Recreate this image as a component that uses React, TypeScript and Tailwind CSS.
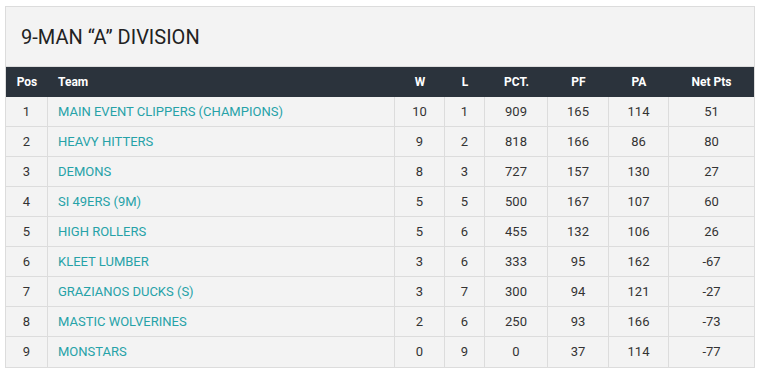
const COLS = "grid grid-cols-[42px_347px_50px_40px_63px_61px_60px_85px]";

interface Row {
  pos: number;
  team: string;
  w: number;
  l: number;
  pct: number;
  pf: number;
  pa: number;
  net: number;
}

const ROWS: Row[] = [
  { pos: 1, team: "MAIN EVENT CLIPPERS (CHAMPIONS)", w: 10, l: 1, pct: 909, pf: 165, pa: 114, net: 51 },
  { pos: 2, team: "HEAVY HITTERS", w: 9, l: 2, pct: 818, pf: 166, pa: 86, net: 80 },
  { pos: 3, team: "DEMONS", w: 8, l: 3, pct: 727, pf: 157, pa: 130, net: 27 },
  { pos: 4, team: "SI 49ERS (9M)", w: 5, l: 5, pct: 500, pf: 167, pa: 107, net: 60 },
  { pos: 5, team: "HIGH ROLLERS", w: 5, l: 6, pct: 455, pf: 132, pa: 106, net: 26 },
  { pos: 6, team: "KLEET LUMBER", w: 3, l: 6, pct: 333, pf: 95, pa: 162, net: -67 },
  { pos: 7, team: "GRAZIANOS DUCKS (S)", w: 3, l: 7, pct: 300, pf: 94, pa: 121, net: -27 },
  { pos: 8, team: "MASTIC WOLVERINES", w: 2, l: 6, pct: 250, pf: 93, pa: 166, net: -73 },
  { pos: 9, team: "MONSTARS", w: 0, l: 9, pct: 0, pf: 37, pa: 114, net: -77 },
];

export default function App() {
  return (
    <div className="min-h-screen bg-white pt-[6px] pl-[5px] font-['Roboto',sans-serif]">
      <div className="w-[750px] border border-[#dcdcdc] bg-[#f3f3f3]">
        {/* Title */}
        <div className="h-[60px] flex items-center pl-[15px] pt-[1px] border-b border-[#dcdcdc]">
          <h2 className="text-[20px] leading-none text-[#222]">9-MAN “A” DIVISION</h2>
        </div>

        {/* Header */}
        <div className={`${COLS} h-[30px] bg-[#2b333c] text-white text-[12px] font-bold items-center`}>
          <div className="text-center">Pos</div>
          <div className="pl-[10px]">Team</div>
          <div className="text-center">W</div>
          <div className="text-center">L</div>
          <div className="text-center">PCT.</div>
          <div className="text-center">PF</div>
          <div className="text-center">PA</div>
          <div className="text-center">Net Pts</div>
        </div>

        {/* Rows */}
        {ROWS.map((r, i) => (
          <div
            key={r.pos}
            className={`${COLS} h-[30px] text-[13px] text-[#333] ${i < ROWS.length - 1 ? "border-b border-[#dcdcdc]" : ""}`}
          >
            <div className="flex items-center justify-center border-r border-[#dcdcdc]">{r.pos}</div>
            <div className="flex items-center pl-[10px] border-r border-[#dcdcdc] text-[#26a2a8]">{r.team}</div>
            <div className="flex items-center justify-center border-r border-[#dcdcdc]">{r.w}</div>
            <div className="flex items-center justify-center border-r border-[#dcdcdc]">{r.l}</div>
            <div className="flex items-center justify-center border-r border-[#dcdcdc]">{r.pct}</div>
            <div className="flex items-center justify-center border-r border-[#dcdcdc]">{r.pf}</div>
            <div className="flex items-center justify-center border-r border-[#dcdcdc]">{r.pa}</div>
            <div className="flex items-center justify-center">{r.net}</div>
          </div>
        ))}
      </div>
    </div>
  );
}
